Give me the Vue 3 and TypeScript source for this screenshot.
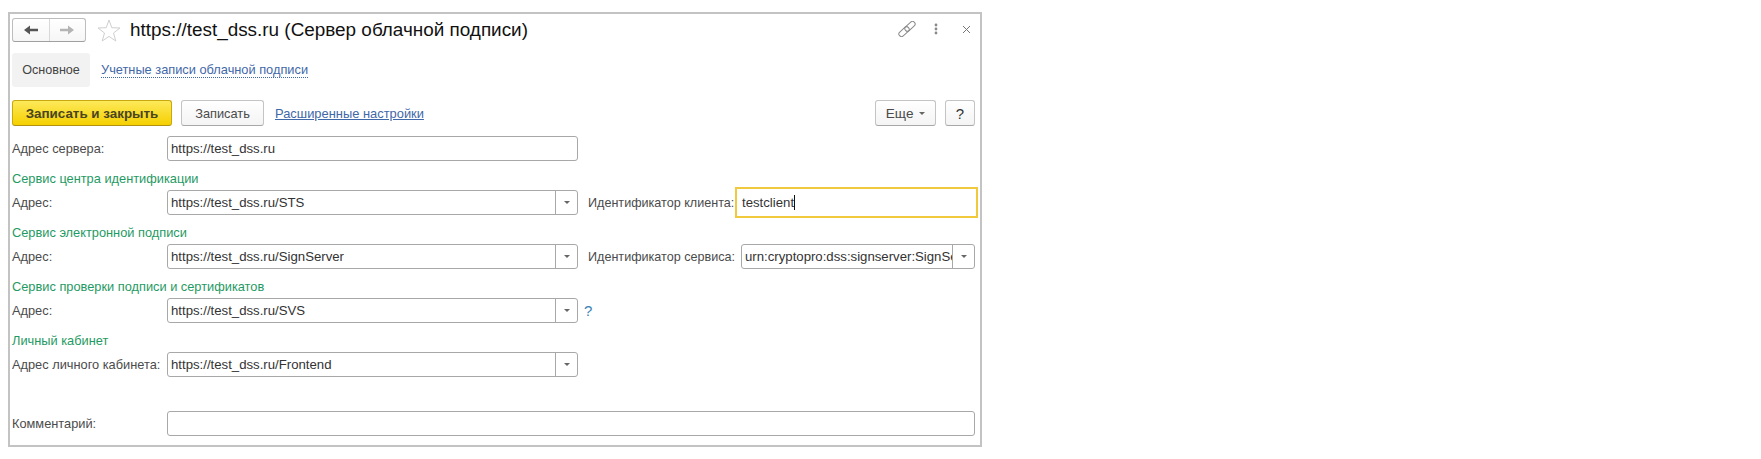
<script setup lang="ts">
const serverUrl = 'https://test_dss.ru'
const title = 'https://test_dss.ru (Сервер облачной подписи)'
</script>

<template>
  <div class="form">
    <header class="head">
      <div class="nav">
        <button class="nav-btn">
          <svg width="16" height="12" viewBox="0 0 16 12"><path d="M1 6 7 1.5V4.8H15V7.2H7V10.5Z" fill="#555" /></svg>
        </button>
        <button class="nav-btn">
          <svg width="16" height="12" viewBox="0 0 16 12"><path d="M15 6 9 1.5V4.8H1V7.2H9V10.5Z" fill="#b4b4b4" /></svg>
        </button>
      </div>
      <svg class="star" width="24" height="23" viewBox="0 0 24 23">
        <path d="M12 1 14.8 8.7 23 9 16.5 14 18.8 22 12 17.4 5.2 22 7.5 14 1 9 9.2 8.7Z" fill="#fff" stroke="#cfcfcf" />
      </svg>
      <h1 class="title">{{ title }}</h1>
      <div class="head-tools">
        <svg width="18" height="16" viewBox="0 0 18 16" fill="none" stroke="#8a8a8a" stroke-width="1">
          <g transform="translate(9 8) rotate(-42)">
            <rect x="-10" y="-2.6" width="12" height="5.2" rx="2.6" />
            <rect x="-2" y="-2.6" width="12" height="5.2" rx="2.6" />
          </g>
        </svg>
        <svg class="kebab" width="4" height="12" viewBox="0 0 4 12" fill="#8a8a8a">
          <circle cx="2" cy="2" r="1.4" />
          <circle cx="2" cy="6" r="1.4" />
          <circle cx="2" cy="10" r="1.4" />
        </svg>
        <svg class="close" width="9" height="9" viewBox="0 0 9 9" stroke="#777" stroke-width="1">
          <path d="M1 1 8 8M8 1 1 8" />
        </svg>
      </div>
    </header>

    <nav class="tabs">
      <span class="tab">Основное</span>
      <a class="tab-link">Учетные записи облачной подписи</a>
    </nav>

    <div class="toolbar">
      <button class="btn primary">Записать и закрыть</button>
      <button class="btn save">Записать</button>
      <a class="link">Расширенные настройки</a>
      <button class="btn more">Еще <i class="caret"></i></button>
      <button class="btn help">?</button>
    </div>

    <div class="row server">
      <label class="label">Адрес сервера:</label>
      <div class="field wide"><span class="val">{{ serverUrl }}</span></div>
    </div>

    <div class="section">Сервис центра идентификации</div>
    <div class="row">
      <label class="label">Адрес:</label>
      <div class="field wide"><span class="val">https://test_dss.ru/STS</span><span class="drop"><i class="caret"></i></span></div>
      <label class="side-label">Идентификатор клиента:</label>
      <div class="field focused"><span class="val">testclient</span><i class="cursor"></i></div>
    </div>

    <div class="section">Сервис электронной подписи</div>
    <div class="row">
      <label class="label">Адрес:</label>
      <div class="field wide"><span class="val">https://test_dss.ru/SignServer</span><span class="drop"><i class="caret"></i></span></div>
      <label class="side-label">Идентификатор сервиса:</label>
      <div class="field service"><span class="val">urn:cryptopro:dss:signserver:SignServer</span><span class="drop"><i class="caret"></i></span></div>
    </div>

    <div class="section">Сервис проверки подписи и сертификатов</div>
    <div class="row">
      <label class="label">Адрес:</label>
      <div class="field wide"><span class="val">https://test_dss.ru/SVS</span><span class="drop"><i class="caret"></i></span></div>
      <span class="hint">?</span>
    </div>

    <div class="section">Личный кабинет</div>
    <div class="row">
      <label class="label">Адрес личного кабинета:</label>
      <div class="field wide"><span class="val">https://test_dss.ru/Frontend</span><span class="drop"><i class="caret"></i></span></div>
    </div>

    <div class="row comment">
      <label class="label">Комментарий:</label>
      <div class="field full"></div>
    </div>
  </div>
</template>

<style>
html, body {
  background: #fff;
}
</style>

<style scoped>
.form {
  box-sizing: border-box;
  width: 974px;
  height: 435px;
  margin: 12px 0 0 8px;
  padding: 4px 5px 0 2px;
  border: 2px solid #c3c3c3;
  font-family: "Liberation Sans", Arial, sans-serif;
  font-size: 12.8px;
  color: #4b4b4b;
}

.head {
  display: flex;
  align-items: center;
  height: 24px;
}
.nav {
  display: flex;
  width: 74px;
  height: 24px;
  box-sizing: border-box;
  border: 1px solid #bdbdbd;
  border-bottom-color: #a0a0a0;
  border-radius: 3px;
  background: linear-gradient(#fff, #f6f6f6);
}
.nav-btn {
  flex: 1;
  display: flex;
  align-items: center;
  justify-content: center;
  padding: 0;
  border: 0;
  background: none;
}
.nav-btn + .nav-btn {
  border-left: 1px solid #d8d8d8;
}
.star {
  margin-left: 11px;
}
.title {
  margin: 0 0 0 9px;
  font-size: 18.9px;
  font-weight: 400;
  color: #111;
}
.head-tools {
  display: flex;
  align-items: center;
  margin-left: auto;
  margin-right: 4px;
  height: 24px;
  position: relative;
  top: -1px;
}
.kebab {
  margin-left: 18px;
}
.close {
  margin-left: 24px;
}

.tabs {
  display: flex;
  align-items: center;
  margin-top: 11px;
  height: 34px;
}
.tab {
  display: flex;
  align-items: center;
  justify-content: center;
  width: 78px;
  height: 34px;
  border-radius: 3px;
  background: #f2f2f2;
  font-size: 12.6px;
  color: #444;
}
.tab-link {
  margin-left: 11px;
  color: #3f68a8;
  border-bottom: 1px dotted #3f68a8;
}

.toolbar {
  display: flex;
  align-items: center;
  margin-top: 13px;
  height: 26px;
}
.btn {
  box-sizing: border-box;
  height: 26px;
  padding: 0;
  border: 1px solid #c4c4c4;
  border-bottom-color: #a8a8a8;
  border-radius: 3px;
  background: linear-gradient(#fff, #f4f4f4);
  font: inherit;
  color: #4b4b4b;
}
.primary {
  width: 160px;
  border-color: #c9a80e;
  border-bottom-color: #b09210;
  background: linear-gradient(#fde95a, #f5d000);
  font-size: 13.4px;
  font-weight: 700;
  color: #4a4420;
}
.save {
  width: 83px;
  margin-left: 9px;
}
.link {
  margin-left: 11px;
  font-size: 12.9px;
  color: #3f68a8;
  text-decoration: underline;
}
.more {
  width: 61px;
  margin-left: auto;
  font-size: 13.6px;
}
.help {
  width: 30px;
  margin-left: 9px;
  font-size: 15px;
  color: #333;
}
.caret {
  display: inline-block;
  width: 0;
  height: 0;
  margin-left: 2px;
  vertical-align: middle;
  border: 3px solid transparent;
  border-top: 3px solid #666;
  border-bottom: 0;
}

.row {
  display: flex;
  align-items: center;
  height: 25px;
}
.server {
  margin-top: 10px;
}
.comment {
  margin-top: 34px;
}
.label {
  flex: none;
  width: 155px;
  white-space: nowrap;
}
.side-label {
  flex: none;
  width: 147px;
  margin-left: 10px;
  font-size: 12.6px;
  white-space: nowrap;
}
.section {
  box-sizing: border-box;
  height: 29px;
  padding-top: 11px;
  line-height: 14px;
  color: #1f9a63;
}
.field {
  display: flex;
  align-items: center;
  box-sizing: border-box;
  height: 25px;
  border: 1px solid #a8a8a8;
  border-radius: 3px;
  background: #fff;
  overflow: hidden;
}
.val {
  flex: 1;
  min-width: 0;
  padding-left: 3px;
  font-size: 13.2px;
  color: #333;
  white-space: nowrap;
  overflow: hidden;
}
.drop {
  flex: none;
  display: flex;
  align-items: center;
  justify-content: center;
  width: 21px;
  height: 100%;
  border-left: 1px solid #a8a8a8;
}
.drop .caret {
  margin-left: 0;
}
.wide {
  flex: none;
  width: 411px;
}
.full {
  flex: 1;
}
.focused {
  flex: none;
  width: 243px;
  height: 31px;
  margin: -3px 0;
  border: 2px solid #f0c93c;
  border-radius: 0;
}
.focused .val {
  flex: none;
  padding-left: 5px;
}
.cursor {
  width: 1px;
  height: 15px;
  background: #111;
}
.service {
  flex: none;
  width: 234px;
  margin-left: 6px;
}
.hint {
  margin-left: 6px;
  font-size: 15px;
  color: #3b82b4;
}
</style>
